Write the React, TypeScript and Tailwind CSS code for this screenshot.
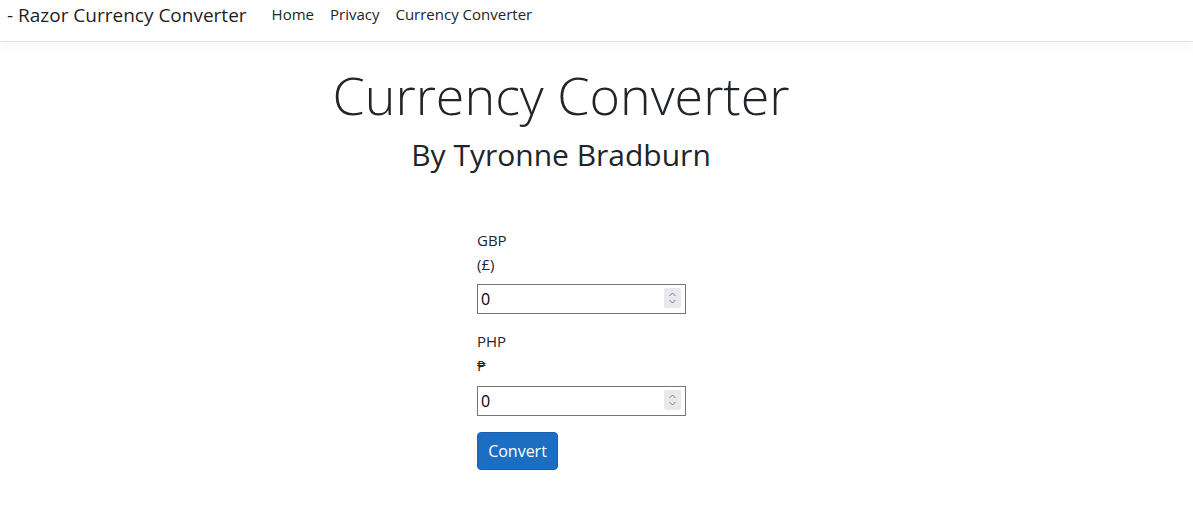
function Spinner() {
  return (
    <span className="pointer-events-none absolute right-[5px] top-[4px] flex h-[20px] w-[17px] items-center justify-center rounded-[2px] bg-[#e9e9ed]">
      <svg width="9" height="14" viewBox="0 0 9 14" fill="none" stroke="#7a7a7a" strokeWidth="1">
        <path d="M1.5 5 L4.5 2 L7.5 5" />
        <path d="M1.5 9 L4.5 12 L7.5 9" />
      </svg>
    </span>
  );
}

function NumberField() {
  return (
    <div className="relative w-[209px]">
      <input
        type="number"
        defaultValue={0}
        className="h-[30px] w-full border border-[#767676] px-[3px] text-[16px] text-black [appearance:textfield] [&::-webkit-inner-spin-button]:appearance-none [&::-webkit-outer-spin-button]:appearance-none"
      />
      <Spinner />
    </div>
  );
}

export default function App() {
  return (
    <div className="min-h-[518px] bg-white text-[#212529]" style={{ fontFamily: '"Open Sans", "Noto Sans", sans-serif' }}>
      <header className="flex h-[42px] items-start border-b border-[#e5e5e5] shadow-[0_4px_12px_rgba(0,0,0,0.04)]">
        <span className="pl-[7px] pt-[2px] text-[19px] leading-[26px] text-black/90">- Razor Currency Converter</span>
        <nav className="ml-[25px] flex gap-[16px] pt-[4px] text-[15px] leading-[20px] text-[#212529]">
          <a>Home</a>
          <a>Privacy</a>
          <a>Currency Converter</a>
        </nav>
      </header>

      <main>
        <div className="flex w-[1122px] flex-col items-center">
          <h1 className="mt-[22px] text-[52px] font-light leading-[62px]">Currency Converter</h1>
          <h2 className="mt-[10px] text-[30px] leading-[38px]">By Tyronne Bradburn</h2>
        </div>

        <form className="mt-[54px] flex flex-col pl-[477px] text-[15px]">
          <label className="leading-[24px]">GBP</label>
          <span className="leading-[24px]">(£)</span>
          <div className="mt-[8px]">
            <NumberField />
          </div>
          <label className="mt-[15px] leading-[24px]">PHP</label>
          <span className="leading-[24px]">₱</span>
          <div className="mt-[9px]">
            <NumberField />
          </div>
          <button
            type="button"
            className="mt-[16px] h-[38px] w-[81px] rounded-[4px] border border-[#1861ac] bg-[#1b6ec2] text-[16px] text-white"
          >
            Convert
          </button>
        </form>
      </main>
    </div>
  );
}
